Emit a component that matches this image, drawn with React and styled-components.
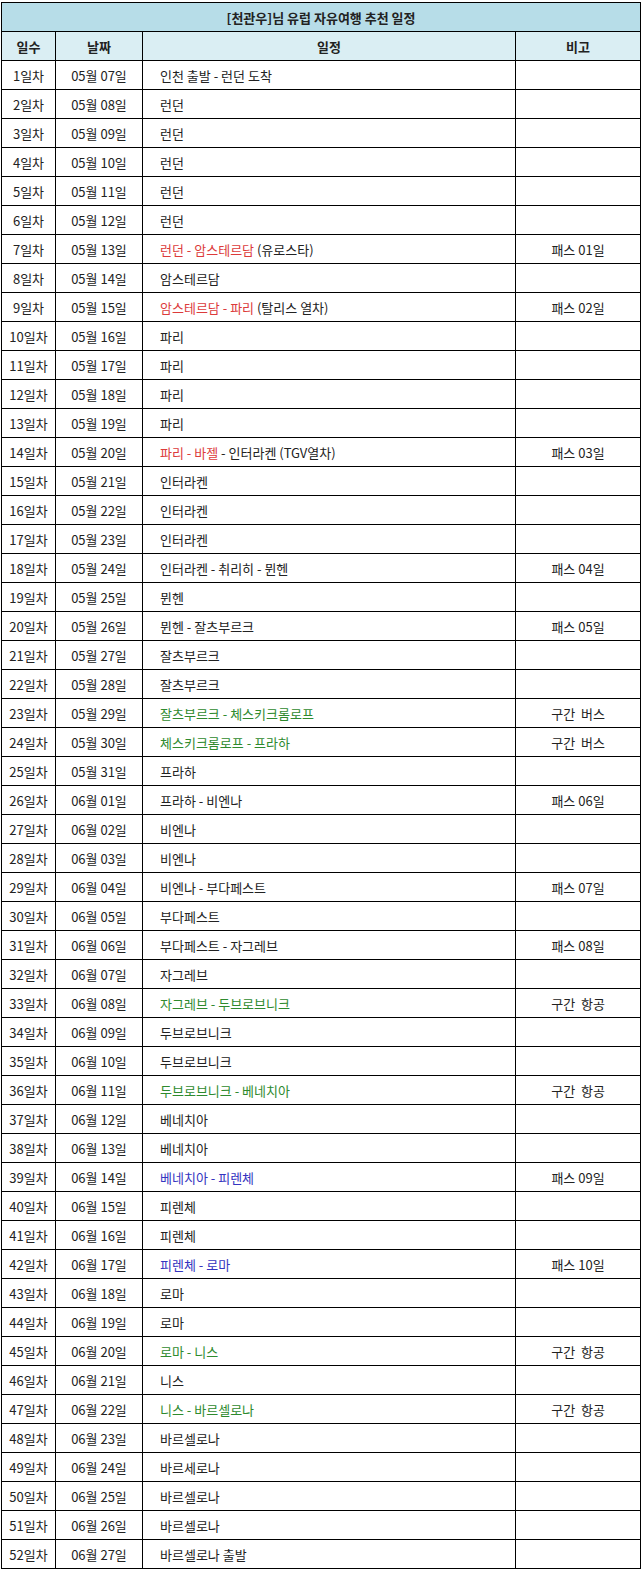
import React from 'react';
import styled, { createGlobalStyle } from 'styled-components';

const GlobalStyle = createGlobalStyle`
  body {
    margin: 0;
    background: #fff;
    font-family: "Noto Sans CJK KR", "Noto Sans", sans-serif;
  }
`;

const Wrap = styled.div`
  padding: 2px 0 0 1px;
`;

const Table = styled.table`
  width: 639px;
  table-layout: fixed;
  border-collapse: collapse;
  font-size: 13px;
  color: #222;
`;

const TitleCell = styled.th`
  height: 28px;
  padding: 0;
  background: #b7dde8;
  border: 1px solid #000;
  font-weight: 700;
  font-size: 13px;
  color: #222;
`;

const HeadCell = styled.th`
  height: 28px;
  padding: 0;
  background: #daeef3;
  border: 1px solid #000;
  font-weight: 700;
  font-size: 13px;
  color: #222;
`;

const Cell = styled.td`
  height: 28px;
  padding: ${(p) => (p.$left ? '0 0 0 17px' : '0')};
  border: 1px solid #000;
  text-align: ${(p) => (p.$left ? 'left' : 'center')};
  white-space: pre;
  line-height: 1;
`;

const Colored = styled.span`
  color: ${(p) => p.$tone};
`;

const tones = {
  red: '#dc3b3b',
  green: '#2e8a2e',
  blue: '#3434c0',
};

// [날짜, 일정 조각들, 비고]
const rows = [
  ['05월 07일', [['인천 출발 - 런던 도착']], ''],
  ['05월 08일', [['런던']], ''],
  ['05월 09일', [['런던']], ''],
  ['05월 10일', [['런던']], ''],
  ['05월 11일', [['런던']], ''],
  ['05월 12일', [['런던']], ''],
  ['05월 13일', [['런던 - 암스테르담', 'red'], [' (유로스타)']], '패스 01일'],
  ['05월 14일', [['암스테르담']], ''],
  ['05월 15일', [['암스테르담 - 파리', 'red'], [' (탈리스 열차)']], '패스 02일'],
  ['05월 16일', [['파리']], ''],
  ['05월 17일', [['파리']], ''],
  ['05월 18일', [['파리']], ''],
  ['05월 19일', [['파리']], ''],
  ['05월 20일', [['파리 - 바젤', 'red'], [' - 인터라켄 (TGV열차)']], '패스 03일'],
  ['05월 21일', [['인터라켄']], ''],
  ['05월 22일', [['인터라켄']], ''],
  ['05월 23일', [['인터라켄']], ''],
  ['05월 24일', [['인터라켄 - 취리히 - 뮌헨']], '패스 04일'],
  ['05월 25일', [['뮌헨']], ''],
  ['05월 26일', [['뮌헨 - 잘츠부르크']], '패스 05일'],
  ['05월 27일', [['잘츠부르크']], ''],
  ['05월 28일', [['잘츠부르크']], ''],
  ['05월 29일', [['잘츠부르크 - 체스키크롬로프', 'green']], '구간  버스'],
  ['05월 30일', [['체스키크롬로프 - 프라하', 'green']], '구간  버스'],
  ['05월 31일', [['프라하']], ''],
  ['06월 01일', [['프라하 - 비엔나']], '패스 06일'],
  ['06월 02일', [['비엔나']], ''],
  ['06월 03일', [['비엔나']], ''],
  ['06월 04일', [['비엔나 - 부다페스트']], '패스 07일'],
  ['06월 05일', [['부다페스트']], ''],
  ['06월 06일', [['부다페스트 - 자그레브']], '패스 08일'],
  ['06월 07일', [['자그레브']], ''],
  ['06월 08일', [['자그레브 - 두브로브니크', 'green']], '구간  항공'],
  ['06월 09일', [['두브로브니크']], ''],
  ['06월 10일', [['두브로브니크']], ''],
  ['06월 11일', [['두브로브니크 - 베네치아', 'green']], '구간  항공'],
  ['06월 12일', [['베네치아']], ''],
  ['06월 13일', [['베네치아']], ''],
  ['06월 14일', [['베네치아 - 피렌체', 'blue']], '패스 09일'],
  ['06월 15일', [['피렌체']], ''],
  ['06월 16일', [['피렌체']], ''],
  ['06월 17일', [['피렌체 - 로마', 'blue']], '패스 10일'],
  ['06월 18일', [['로마']], ''],
  ['06월 19일', [['로마']], ''],
  ['06월 20일', [['로마 - 니스', 'green']], '구간  항공'],
  ['06월 21일', [['니스']], ''],
  ['06월 22일', [['니스 - 바르셀로나', 'green']], '구간  항공'],
  ['06월 23일', [['바르셀로나']], ''],
  ['06월 24일', [['바르세로나']], ''],
  ['06월 25일', [['바르셀로나']], ''],
  ['06월 26일', [['바르셀로나']], ''],
  ['06월 27일', [['바르셀로나 출발']], ''],
];

export default function App() {
  return (
    <Wrap>
      <GlobalStyle />
      <Table>
        <colgroup>
          <col style={{ width: 54 }} />
          <col style={{ width: 87 }} />
          <col style={{ width: 373 }} />
          <col style={{ width: 125 }} />
        </colgroup>
        <thead>
          <tr>
            <TitleCell colSpan={4}>[천관우]님 유럽 자유여행 추천 일정</TitleCell>
          </tr>
          <tr>
            <HeadCell>일수</HeadCell>
            <HeadCell>날짜</HeadCell>
            <HeadCell>일정</HeadCell>
            <HeadCell>비고</HeadCell>
          </tr>
        </thead>
        <tbody>
          {rows.map(([date, parts, note], i) => (
            <tr key={i}>
              <Cell>{i + 1}일차</Cell>
              <Cell>{date}</Cell>
              <Cell $left>
                {parts.map(([text, tone], j) =>
                  tone ? (
                    <Colored key={j} $tone={tones[tone]}>{text}</Colored>
                  ) : (
                    <span key={j}>{text}</span>
                  )
                )}
              </Cell>
              <Cell>{note}</Cell>
            </tr>
          ))}
        </tbody>
      </Table>
    </Wrap>
  );
}
